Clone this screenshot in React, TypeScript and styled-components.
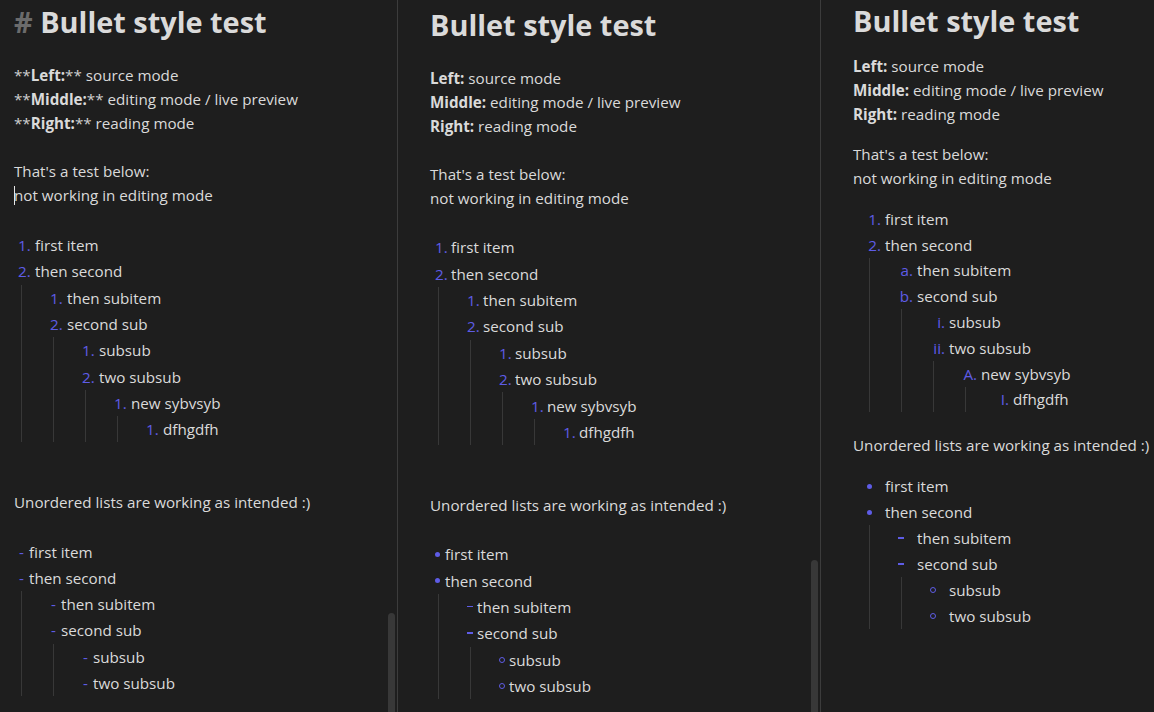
import React from 'react';
import styled, { createGlobalStyle } from 'styled-components';

const ACCENT = '#5e5ce6';
const TEXT = '#dadada';
const GUIDE = '#383838';

const GlobalStyle = createGlobalStyle`
  html, body { margin: 0; padding: 0; background: #1e1e1e; }
  body {
    font-family: "Open Sans", "Noto Sans", sans-serif;
    color: ${TEXT};
    font-size: 15.2px;
  }
`;

type Node = { text: string; children?: Node[] };
type Mode = 'source' | 'live' | 'reading';
type Kind = 'ol' | 'ul';

interface Spec {
  markerW: number;
  align: 'flex-start' | 'flex-end' | 'center';
  padL: number;
  padR: number;
  rowH: number;
  guide: number;
  indent: number;
}

const specs: Record<Mode, Record<Kind, Spec>> = {
  source: {
    ol: { markerW: 17, align: 'flex-start', padL: 0, padR: 0, rowH: 26.3, guide: 3, indent: 32 },
    ul: { markerW: 11, align: 'flex-start', padL: 1, padR: 0, rowH: 26.3, guide: 3, indent: 32 },
  },
  live: {
    ol: { markerW: 16, align: 'flex-start', padL: 0, padR: 0, rowH: 26.4, guide: 3, indent: 32 },
    ul: { markerW: 10, align: 'flex-start', padL: 0, padR: 0, rowH: 26.4, guide: 3, indent: 32 },
  },
  reading: {
    ol: { markerW: 32, align: 'flex-end', padL: 0, padR: 4, rowH: 25.8, guide: 16, indent: 32 },
    ul: { markerW: 32, align: 'center', padL: 0, padR: 0, rowH: 26, guide: 16, indent: 32 },
  },
};

const orderedData: Node[] = [
  { text: 'first item' },
  {
    text: 'then second',
    children: [
      { text: 'then subitem' },
      {
        text: 'second sub',
        children: [
          { text: 'subsub' },
          {
            text: 'two subsub',
            children: [{ text: 'new sybvsyb', children: [{ text: 'dfhgdfh' }] }],
          },
        ],
      },
    ],
  },
];

const unorderedData: Node[] = [
  { text: 'first item' },
  {
    text: 'then second',
    children: [
      { text: 'then subitem' },
      { text: 'second sub', children: [{ text: 'subsub' }, { text: 'two subsub' }] },
    ],
  },
];

/* ---------- layout ---------- */

const Workspace = styled.main`
  display: flex;
  width: 1154px;
  height: 712px;
  overflow: hidden;
  background: #1e1e1e;
`;

const Pane = styled.section<{ $w: number; $last?: boolean }>`
  position: relative;
  flex: 0 0 ${(p) => p.$w}px;
  height: 100%;
  overflow: hidden;
  box-sizing: border-box;
  border-right: ${(p) => (p.$last ? 'none' : '1px solid #3c3c3c')};
`;

const Content = styled.div<{ $left: number; $top: number }>`
  padding: ${(p) => p.$top}px 0 0 ${(p) => p.$left}px;
  white-space: nowrap;
`;

const Scrollbar = styled.div<{ $top: number }>`
  position: absolute;
  right: 2px;
  top: ${(p) => p.$top}px;
  bottom: 0;
  width: 7px;
  background: #383838;
  border-radius: 4px 4px 0 0;
`;

/* ---------- text ---------- */

const Heading = styled.h1<{ $mt?: number; $mb?: number }>`
  margin: ${(p) => p.$mt ?? 0}px 0 ${(p) => p.$mb ?? 0}px 0;
  height: 36px;
  font-size: 28.9px;
  line-height: 36px;
  font-weight: 700;
  color: ${TEXT};
`;

const HashMark = styled.span`
  color: #6b6b6b;
`;

const TextLine = styled.div`
  height: 24px;
  line-height: 24px;
`;

const Blank = styled.div<{ $h: number }>`
  height: ${(p) => p.$h}px;
`;

const Para = styled.p<{ $mb?: number }>`
  margin: 0 0 ${(p) => p.$mb ?? 0}px 0;
  line-height: 24px;
`;

const Strong = styled.strong`
  font-weight: 700;
`;

const Syntax = styled.span`
  color: #cfcfcf;
`;

const Caret = styled.span`
  display: inline-block;
  width: 0;
  height: 19px;
  border-left: 1px solid #e6e6e6;
  vertical-align: -4px;
  margin-right: -1px;
`;

/* ---------- lists ---------- */

const ListBlock = styled.div<{ $ml: number; $mb?: number }>`
  margin-left: ${(p) => p.$ml}px;
  margin-bottom: ${(p) => p.$mb ?? 0}px;
`;

const Row = styled.div<{ $h: number }>`
  display: flex;
  align-items: center;
  height: ${(p) => p.$h}px;
  white-space: nowrap;
`;

const Marker = styled.span<{ $w: number; $align: string; $padL: number; $padR: number }>`
  flex: 0 0 ${(p) => p.$w}px;
  box-sizing: border-box;
  display: flex;
  align-items: center;
  justify-content: ${(p) => p.$align};
  padding-left: ${(p) => p.$padL}px;
  padding-right: ${(p) => p.$padR}px;
  color: ${ACCENT};
  height: 100%;
`;

const ItemText = styled.span`
  color: ${TEXT};
`;

const Children = styled.div<{ $guide: number; $indent: number }>`
  margin-left: ${(p) => p.$guide}px;
  padding-left: ${(p) => p.$indent - p.$guide - 1}px;
  border-left: 1px solid ${GUIDE};
`;

const Dot = styled.span`
  width: 5px;
  height: 5px;
  border-radius: 50%;
  background: ${ACCENT};
`;

const Dash = styled.span`
  width: 6px;
  height: 1.4px;
  margin-top: -1px;
  background: ${ACCENT};
`;

const Ring = styled.span`
  width: 6px;
  height: 6px;
  box-sizing: border-box;
  border: 1.4px solid ${ACCENT};
  border-radius: 50%;
`;

const toRoman = (n: number) => {
  const map: [number, string][] = [
    [10, 'x'], [9, 'ix'], [5, 'v'], [4, 'iv'], [1, 'i'],
  ];
  let s = '';
  let v = n;
  for (const [k, r] of map) {
    while (v >= k) {
      s += r;
      v -= k;
    }
  }
  return s;
};

const orderedLabel = (mode: Mode, depth: number, idx: number) => {
  if (mode !== 'reading') return `${idx + 1}.`;
  const styles = [
    () => `${idx + 1}`,
    () => String.fromCharCode(97 + idx),
    () => toRoman(idx + 1),
    () => String.fromCharCode(65 + idx),
    () => toRoman(idx + 1).toUpperCase(),
  ];
  return `${styles[depth % styles.length]()}.`;
};

const bulletGlyph = (mode: Mode, depth: number) => {
  if (mode === 'source') return '-';
  const d = depth % 3;
  if (d === 0) return <Dot />;
  if (d === 1) return <Dash />;
  return <Ring />;
};

const ListTree: React.FC<{ nodes: Node[]; mode: Mode; kind: Kind; depth?: number }> = ({
  nodes,
  mode,
  kind,
  depth = 0,
}) => {
  const s = specs[mode][kind];
  return (
    <>
      {nodes.map((n, i) => (
        <div key={`${depth}-${i}`}>
          <Row $h={s.rowH}>
            <Marker $w={s.markerW} $align={s.align} $padL={s.padL} $padR={s.padR}>
              {kind === 'ol' ? orderedLabel(mode, depth, i) : bulletGlyph(mode, depth)}
            </Marker>
            <ItemText>{n.text}</ItemText>
          </Row>
          {n.children && (
            <Children $guide={s.guide} $indent={s.indent}>
              <ListTree nodes={n.children} mode={mode} kind={kind} depth={depth + 1} />
            </Children>
          )}
        </div>
      ))}
    </>
  );
};

/* ---------- panes ---------- */

const SourcePane = () => (
  <Pane $w={398}>
    <Content $left={14} $top={4}>
      <Heading>
        <HashMark># </HashMark>Bullet style test
      </Heading>
      <Blank $h={23} />
      <TextLine>
        <Syntax>**</Syntax>
        <Strong>Left:</Strong>
        <Syntax>**</Syntax> source mode
      </TextLine>
      <TextLine>
        <Syntax>**</Syntax>
        <Strong>Middle:</Strong>
        <Syntax>**</Syntax> editing mode / live preview
      </TextLine>
      <TextLine>
        <Syntax>**</Syntax>
        <Strong>Right:</Strong>
        <Syntax>**</Syntax> reading mode
      </TextLine>
      <Blank $h={24} />
      <TextLine>That's a test below:</TextLine>
      <TextLine>
        <Caret />
        not working in editing mode
      </TextLine>
      <Blank $h={25} />
      <ListBlock $ml={4}>
        <ListTree nodes={orderedData} mode="source" kind="ol" />
      </ListBlock>
      <Blank $h={48} />
      <TextLine>Unordered lists are working as intended :)</TextLine>
      <Blank $h={24} />
      <ListBlock $ml={4}>
        <ListTree nodes={unorderedData} mode="source" kind="ul" />
      </ListBlock>
    </Content>
    <Scrollbar $top={613} />
  </Pane>
);

const LivePane = () => (
  <Pane $w={423}>
    <Content $left={32} $top={7}>
      <Heading>Bullet style test</Heading>
      <Blank $h={23} />
      <TextLine>
        <Strong>Left:</Strong> source mode
      </TextLine>
      <TextLine>
        <Strong>Middle:</Strong> editing mode / live preview
      </TextLine>
      <TextLine>
        <Strong>Right:</Strong> reading mode
      </TextLine>
      <Blank $h={24} />
      <TextLine>That's a test below:</TextLine>
      <TextLine>not working in editing mode</TextLine>
      <Blank $h={24} />
      <ListBlock $ml={5}>
        <ListTree nodes={orderedData} mode="live" kind="ol" />
      </ListBlock>
      <Blank $h={48} />
      <TextLine>Unordered lists are working as intended :)</TextLine>
      <Blank $h={24} />
      <ListBlock $ml={5}>
        <ListTree nodes={unorderedData} mode="live" kind="ul" />
      </ListBlock>
    </Content>
    <Scrollbar $top={560} />
  </Pane>
);

const ReadingPane = () => (
  <Pane $w={333} $last>
    <Content $left={32} $top={0}>
      <Heading $mt={3} $mb={15}>
        Bullet style test
      </Heading>
      <Para $mb={16}>
        <Strong>Left:</Strong> source mode
        <br />
        <Strong>Middle:</Strong> editing mode / live preview
        <br />
        <Strong>Right:</Strong> reading mode
      </Para>
      <Para $mb={16}>
        That's a test below:
        <br />
        not working in editing mode
      </Para>
      <ListBlock $ml={0} $mb={21}>
        <ListTree nodes={orderedData} mode="reading" kind="ol" />
      </ListBlock>
      <Para $mb={16}>Unordered lists are working as intended :)</Para>
      <ListBlock $ml={0}>
        <ListTree nodes={unorderedData} mode="reading" kind="ul" />
      </ListBlock>
    </Content>
  </Pane>
);

export default function App() {
  return (
    <>
      <GlobalStyle />
      <Workspace>
        <SourcePane />
        <LivePane />
        <ReadingPane />
      </Workspace>
    </>
  );
}
